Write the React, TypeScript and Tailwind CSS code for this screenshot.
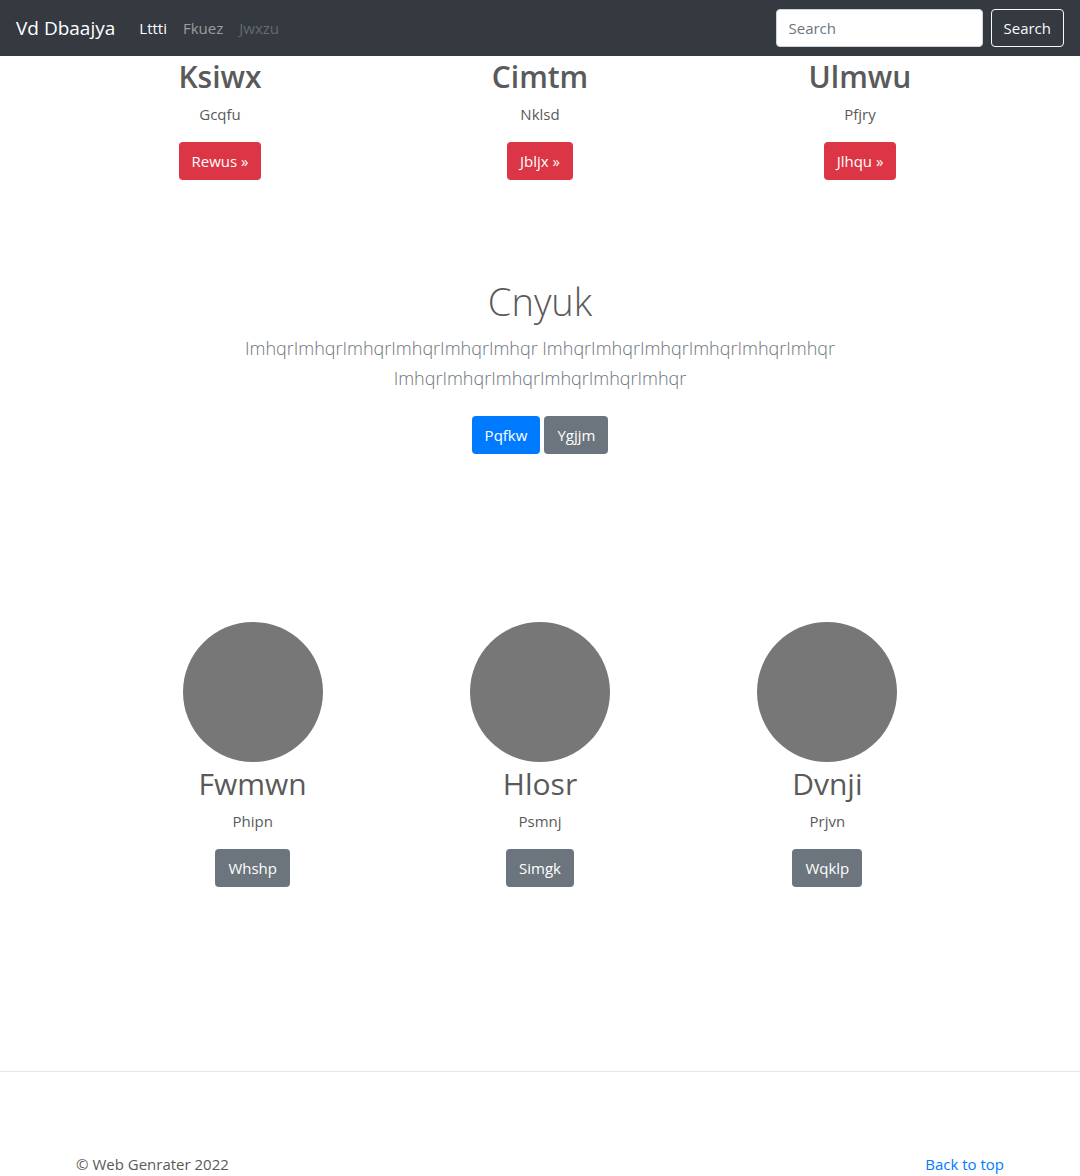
type Item = { title: string; text: string; action: string };

const features: Item[] = [
  { title: "Ksiwx", text: "Gcqfu", action: "Rewus »" },
  { title: "Cimtm", text: "Nklsd", action: "Jbljx »" },
  { title: "Ulmwu", text: "Pfjry", action: "Jlhqu »" },
];

const profiles: Item[] = [
  { title: "Fwmwn", text: "Phipn", action: "Whshp" },
  { title: "Hlosr", text: "Psmnj", action: "Simgk" },
  { title: "Dvnji", text: "Prjvn", action: "Wqklp" },
];

const button = "h-[38px] rounded px-[13px] text-[15px] leading-6 text-white";

export default function App() {
  return (
    <div className="min-h-screen bg-white font-['Segoe_UI','Open_Sans',sans-serif] text-[15px] leading-6 text-[#5a5a5a]">
      <header>
        <nav className="flex h-14 items-center bg-[#343a40] px-4">
          <a href="#" className="mr-6 text-[19px] leading-8 text-white">Vd Dbaajya</a>
          <div className="flex flex-1 gap-4">
            <a href="#" className="text-white">Lttti</a>
            <a href="#" className="text-white/50">Fkuez</a>
            <a href="#" aria-disabled="true" className="text-white/25">Jwxzu</a>
          </div>
          <form className="flex gap-2" onSubmit={(e) => e.preventDefault()}>
            <input
              type="search"
              placeholder="Search"
              aria-label="Search"
              className="h-[38px] w-[207px] rounded border border-[#ced4da] bg-white px-3 text-[15px] text-[#495057] placeholder:text-[#6c757d]"
            />
            <button type="submit" className="h-[38px] rounded border border-[#f8f9fa] px-3 text-[15px] text-[#f8f9fa]">
              Search
            </button>
          </form>
        </nav>
      </header>

      <main className="text-center">
        <section className="mx-auto grid max-w-[960px] grid-cols-3">
          {features.map((f) => (
            <div key={f.title} className="px-4">
              <h2 className="mb-1 text-[30px] leading-[42px] font-semibold">{f.title}</h2>
              <p className="mb-4">{f.text}</p>
              <button type="button" className={`${button} bg-[#dc3545]`}>{f.action}</button>
            </div>
          ))}
        </section>

        <section className="mx-auto mt-[97px] max-w-[640px] px-4">
          <h1 className="mb-2 text-[38px] leading-[48px] font-light">Cnyuk</h1>
          <p className="mb-[23px] text-[18px] leading-[30px] font-light text-[#6c757d]">
            ImhqrImhqrImhqrImhqrImhqrImhqr ImhqrImhqrImhqrImhqrImhqrImhqr ImhqrImhqrImhqrImhqrImhqrImhqr
          </p>
          <div className="flex justify-center gap-1">
            <button type="button" className={`${button} bg-[#007bff]`}>Pqfkw</button>
            <button type="button" className={`${button} bg-[#6c757d]`}>Ygjjm</button>
          </div>
        </section>

        <section className="mx-auto mt-[168px] grid max-w-[862px] grid-cols-3">
          {profiles.map((p) => (
            <div key={p.title} className="px-4">
              <div className="mx-auto mb-px size-[140px] rounded-full bg-[#777777]" />
              <h2 className="mb-1 text-[30px] leading-[42px]">{p.title}</h2>
              <p className="mb-4">{p.text}</p>
              <button type="button" className={`${button} bg-[#6c757d]`}>{p.action}</button>
            </div>
          ))}
        </section>
      </main>

      <hr className="mt-[184px] border-black/10" />
      <footer className="mx-auto mt-20 flex max-w-[960px] justify-between px-4">
        <p>© Web Genrater 2022</p>
        <a href="#" className="text-[#007bff]">Back to top</a>
      </footer>
    </div>
  );
}
